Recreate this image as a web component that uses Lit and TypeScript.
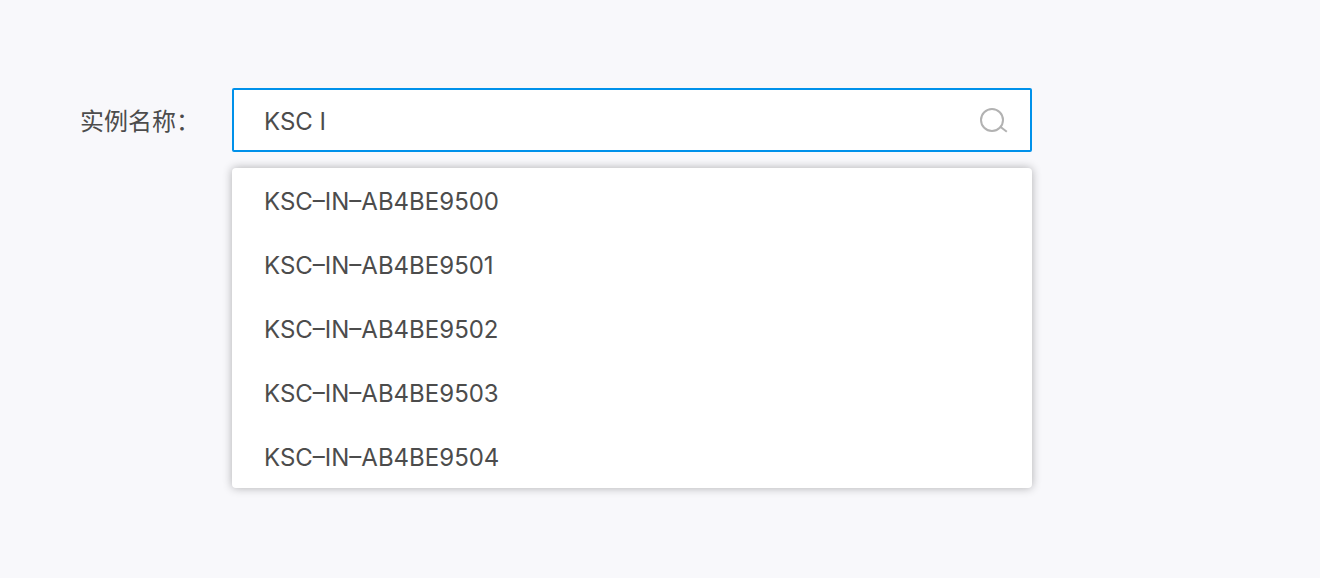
import { LitElement, html, css } from "lit";
import { customElement, state } from "lit/decorators.js";

@customElement("app-root")
class AppRoot extends LitElement {
  static styles = css`
    :host {
      display: block;
      box-sizing: border-box;
      min-height: 100vh;
      padding: 88px 80px;
      background: #f8f8fb;
      color: #4c4c4c;
      font-family: Inter, "Noto Sans CJK SC", sans-serif;
      font-size: 24px;
      font-weight: 400;
      line-height: 32px;
    }
    .row {
      display: flex;
      align-items: flex-start;
    }
    .label {
      flex: none;
      width: 152px;
      line-height: 64px;
      font-family: "Noto Sans CJK SC", sans-serif;
      white-space: nowrap;
    }
    .combo {
      flex: 1;
      min-width: 0;
      max-width: 800px;
    }
    .field {
      display: flex;
      align-items: center;
      box-sizing: border-box;
      height: 64px;
      padding: 0 22px 0 30px;
      border: 2px solid #0091ea;
      border-radius: 2px;
      background: #fff;
    }
    .input {
      flex: 1;
      min-width: 0;
      padding: 4px 0 0;
      border: 0;
      outline: 0;
      background: none;
      color: inherit;
      font: inherit;
    }
    .search {
      display: flex;
      padding: 0;
      border: 0;
      background: none;
      color: #b2b2b2;
      cursor: pointer;
    }
    .menu {
      margin: 16px 0 0;
      padding: 0;
      list-style: none;
      border-radius: 4px;
      background: #fff;
      box-shadow: 0 0 10px rgba(0, 0, 0, 0.3);
    }
    .option {
      padding: 4px 32px 0;
      line-height: 60px;
      overflow: hidden;
      text-overflow: ellipsis;
      white-space: nowrap;
      cursor: pointer;
    }
  `;

  @state() private value = "KSC I";

  private names = [
    "KSC–IN–AB4BE9500",
    "KSC–IN–AB4BE9501",
    "KSC–IN–AB4BE9502",
    "KSC–IN–AB4BE9503",
    "KSC–IN–AB4BE9504",
  ];

  render() {
    return html`
      <div class="row">
        <label class="label" for="name">实例名称：</label>
        <div class="combo">
          <div class="field">
            <input
              class="input"
              id="name"
              type="text"
              role="combobox"
              aria-expanded="true"
              aria-controls="names"
              autocomplete="off"
              .value=${this.value}
              @input=${(e: Event) => (this.value = (e.target as HTMLInputElement).value)}
            />
            <button class="search" type="button" aria-label="搜索">
              <svg width="30" height="26" viewBox="0 0 30 26" fill="none" stroke="currentColor" stroke-width="2">
                <circle cx="14" cy="13" r="11" />
                <path d="M22 19.5L28.8 24.8" />
              </svg>
            </button>
          </div>
          <ul class="menu" id="names" role="listbox">
            ${this.names.map(
              (n) => html`<li class="option" role="option" @click=${() => (this.value = n)}>${n}</li>`
            )}
          </ul>
        </div>
      </div>
    `;
  }
}
